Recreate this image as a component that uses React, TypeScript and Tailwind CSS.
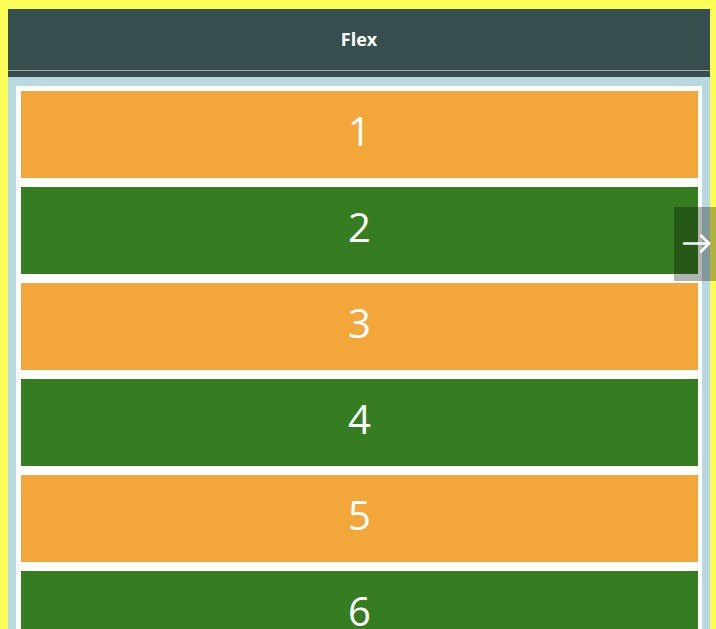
import React from "react";

const items = [1, 2, 3, 4, 5, 6, 7];

export default function App() {
    return (
        <div
            className="relative h-screen overflow-hidden bg-[#fdfd58] pt-[9px] pl-[8px] pr-[6px]"
            style={{ fontFamily: "'Open Sans', 'Noto Sans', sans-serif" }}
        >
            <header className="bg-[#364e4e]">
                <div className="flex h-[61px] items-center justify-center text-[18px] font-bold text-white">
                    Flex
                </div>
                <div className="h-[1px] bg-[#a3a9a9]" />
                <div className="h-[6px]" />
            </header>
            <main className="bg-[#b8d8e2] px-[8px] pt-[9px]">
                <div className="flex flex-col gap-[9px] bg-white pl-[5px] pr-[4px] pt-[5px]">
                    {items.map((n) => (
                        <div
                            key={n}
                            className={`flex h-[87px] items-center justify-center pb-[8px] text-[40px] leading-none text-white ${
                                n % 2 === 1 ? "bg-[#f3a73b]" : "bg-[#367d22]"
                            }`}
                        >
                            {n}
                        </div>
                    ))}
                </div>
            </main>
            <div className="absolute right-0 top-[207px] flex h-[74px] w-[42px] items-center justify-center bg-black/30">
                <svg width="42" height="74" viewBox="0 0 42 74" fill="none" stroke="white" strokeWidth="2.6" strokeLinecap="round" strokeLinejoin="round">
                    <path d="M10 36.5 H35" />
                    <path d="M27 28.5 L35 36.5 L27 44.5" />
                </svg>
            </div>
        </div>
    );
}
